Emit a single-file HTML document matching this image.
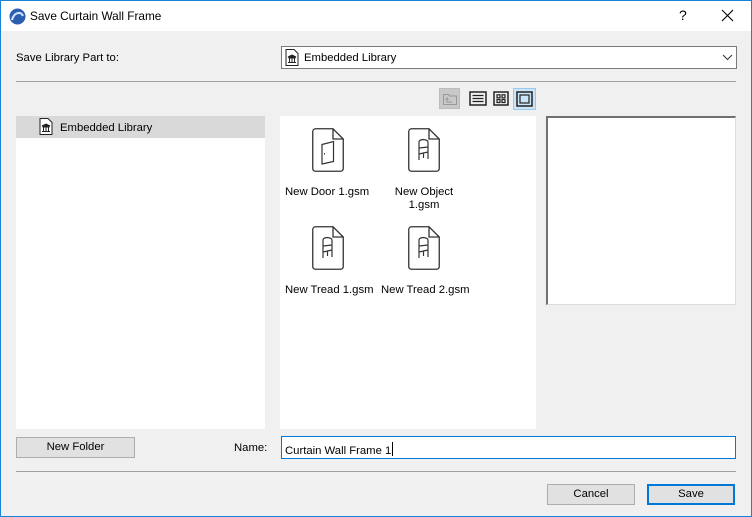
<!DOCTYPE html>
<html><head><meta charset="utf-8"><style>
*{box-sizing:border-box;margin:0;padding:0}
body{width:752px;height:517px;overflow:hidden;font-family:"Liberation Sans",sans-serif;font-size:11.3px;color:#000;background:#f0f0f0;position:relative}
.a{position:absolute}
.win{left:0;top:0;width:752px;height:517px;border:1px solid #1883d7;border-top:none}
.title{left:0;top:0;width:752px;height:31px;background:#fff;border-left:1px solid #1883d7;border-right:1px solid #1883d7;border-top:1px solid #1883d7}
.btn{background:#e1e1e1;border:1px solid #adadad;text-align:center;line-height:19px}
.lbl{white-space:nowrap}
</style></head><body>
<div class="a win"></div>
<div class="a title"></div>
<svg class="a" style="left:9px;top:8px" width="17" height="17" viewBox="0 0 17 17"><circle cx="8.5" cy="8.5" r="8" fill="#2a5fb0"/><path d="M3 12 C5 4,12 3,14 8" stroke="#cfe0f7" stroke-width="2.2" fill="none"/></svg>
<div class="a lbl" style="left:30px;top:9px;font-size:11.8px">Save Curtain Wall Frame</div>
<div class="a lbl" style="left:679px;top:7px;font-size:14px">?</div>
<svg class="a" style="left:721px;top:9px" width="13" height="13"><path d="M1 1L12 12M12 1L1 12" stroke="#000" stroke-width="1.1"/></svg>

<div class="a lbl" style="left:16px;top:52px">Save Library Part to:</div>
<div class="a" style="left:281px;top:46px;width:456px;height:23px;background:#fff;border:1px solid #7a7a7a"></div>
<svg class="a" style="left:285px;top:49px" width="14" height="17" viewBox="0 0 14 17"><path d="M1 .5H9L13 4.5V16.5H1Z" fill="#fff" stroke="#222"/><path d="M3 8L7 6L11 8ZM3.5 9h7M4.5 9v4M7 9v4M9.5 9v4M3 13.5h8" stroke="#222" stroke-width="1" fill="#222"/></svg>
<div class="a lbl" style="left:304px;top:52px">Embedded Library</div>
<svg class="a" style="left:722px;top:54px" width="11" height="7"><path d="M1 1L5.5 5.5L10 1" stroke="#333" fill="none"/></svg>
<div class="a" style="left:16px;top:81px;width:720px;height:1px;background:#a0a0a0"></div>

<div class="a" style="left:439px;top:88px;width:21px;height:21px;background:#c8c8c8;border:1px solid #bcbcbc"></div>
<svg class="a" style="left:442px;top:91px" width="16" height="15"><path d="M1.5 3.5h5l1 1.5h7v8.5h-13z" fill="none" stroke="#999"/><path d="M5 7v4h5M3.5 8.5L5 7l1.5 1.5" stroke="#999" fill="none"/></svg>
<svg class="a" style="left:469px;top:91px" width="18" height="15"><rect x="1" y="1" width="16" height="13" fill="none" stroke="#222" stroke-width="1.5"/><path d="M3.5 4.5h11M3.5 7.5h11M3.5 10.5h11" stroke="#222" stroke-width="1.2"/></svg>
<svg class="a" style="left:493px;top:91px" width="16" height="15"><rect x="1" y="1" width="14" height="13" fill="none" stroke="#222" stroke-width="1.5"/><rect x="4" y="3.8" width="3" height="3" fill="none" stroke="#222" stroke-width="1.2"/><rect x="9" y="3.8" width="3" height="3" fill="none" stroke="#222" stroke-width="1.2"/><rect x="4" y="8.5" width="3" height="3" fill="none" stroke="#222" stroke-width="1.2"/><rect x="9" y="8.5" width="3" height="3" fill="none" stroke="#222" stroke-width="1.2"/></svg>
<div class="a" style="left:513px;top:88px;width:23px;height:22px;background:#cce4f7;border:1px solid #99c9ef"></div>
<svg class="a" style="left:516px;top:91px" width="17" height="16"><rect x="1" y="1" width="15" height="14" fill="none" stroke="#222" stroke-width="1.5"/><rect x="4" y="4" width="9" height="8" fill="none" stroke="#222" stroke-width="1.2"/></svg>

<div class="a" style="left:16px;top:116px;width:249px;height:313px;background:#fff"></div>
<div class="a" style="left:16px;top:116px;width:249px;height:22px;background:#d9d9d9"></div>
<svg class="a" style="left:39px;top:118px" width="14" height="17" viewBox="0 0 14 17"><path d="M1 .5H9L13 4.5V16.5H1Z" fill="#fff" stroke="#222"/><path d="M3 8L7 6L11 8ZM3.5 9h7M4.5 9v4M7 9v4M9.5 9v4M3 13.5h8" stroke="#222" stroke-width="1" fill="#222"/></svg>
<div class="a lbl" style="left:60px;top:122px">Embedded Library</div>

<div class="a" style="left:280px;top:116px;width:256px;height:313px;background:#fff"></div>

<svg width="0" height="0" style="position:absolute"><defs>
<path id="doc" d="M3.5 .75H21L31.25 11V40.5A2.75 2.75 0 0 1 28.5 43.25H3.5A2.75 2.75 0 0 1 .75 40.5V3.5A2.75 2.75 0 0 1 3.5 .75ZM21 .75V11H31.25" fill="none" stroke="#333" stroke-width="1.3"/>
<g id="chair" fill="none" stroke="#333" stroke-width="1.2"><path d="M11 26V14Q11 12 15 11.5Q20 12 20 14V24M11 26L20 24M11 26V32M20 24V31M15.5 25V30M11 20L20 19"/></g>
</defs></svg>
<svg class="a" style="left:312px;top:128px" width="33" height="45"><use href="#doc"/><path d="M10 16.5L21.5 13.5V33.5L10 36Z" fill="none" stroke="#333" stroke-width="1.2"/><path d="M12.5 25v1.5" stroke="#333"/></svg>
<svg class="a" style="left:408px;top:128px" width="33" height="45"><use href="#doc"/><use href="#chair"/></svg>
<svg class="a" style="left:312px;top:226px" width="33" height="45"><use href="#doc"/><use href="#chair"/></svg>
<svg class="a" style="left:408px;top:226px" width="33" height="45"><use href="#doc"/><use href="#chair"/></svg>
<div class="a lbl" style="left:285px;top:186px">New Door 1.gsm</div>
<div class="a lbl" style="left:384px;top:186px;width:80px;text-align:center;line-height:13px">New Object<br>1.gsm</div>
<div class="a lbl" style="left:285px;top:284px">New Tread 1.gsm</div>
<div class="a lbl" style="left:381px;top:284px">New Tread 2.gsm</div>

<div class="a" style="left:546px;top:116px;width:190px;height:189px;background:#fff;border-top:2px solid #707070;border-left:2px solid #707070;border-right:1px solid #ddd;border-bottom:1px solid #ddd"></div>

<div class="a btn" style="left:16px;top:437px;width:119px;height:21px">New Folder</div>
<div class="a lbl" style="left:234px;top:442px">Name:</div>
<div class="a" style="left:281px;top:436px;width:455px;height:23px;background:#fff;border:1px solid #0078d7"></div>
<div class="a lbl" style="left:285px;top:442px">Curtain Wall Frame 1<span style="display:inline-block;width:1px;height:14px;background:#000;vertical-align:-2px;margin-left:1px"></span></div>
<div class="a" style="left:16px;top:471px;width:720px;height:1px;background:#a0a0a0"></div>
<div class="a btn" style="left:547px;top:484px;width:88px;height:21px">Cancel</div>
<div class="a btn" style="left:647px;top:484px;width:88px;height:21px;border:2px solid #0078d7;line-height:17px">Save</div>
</body></html>
